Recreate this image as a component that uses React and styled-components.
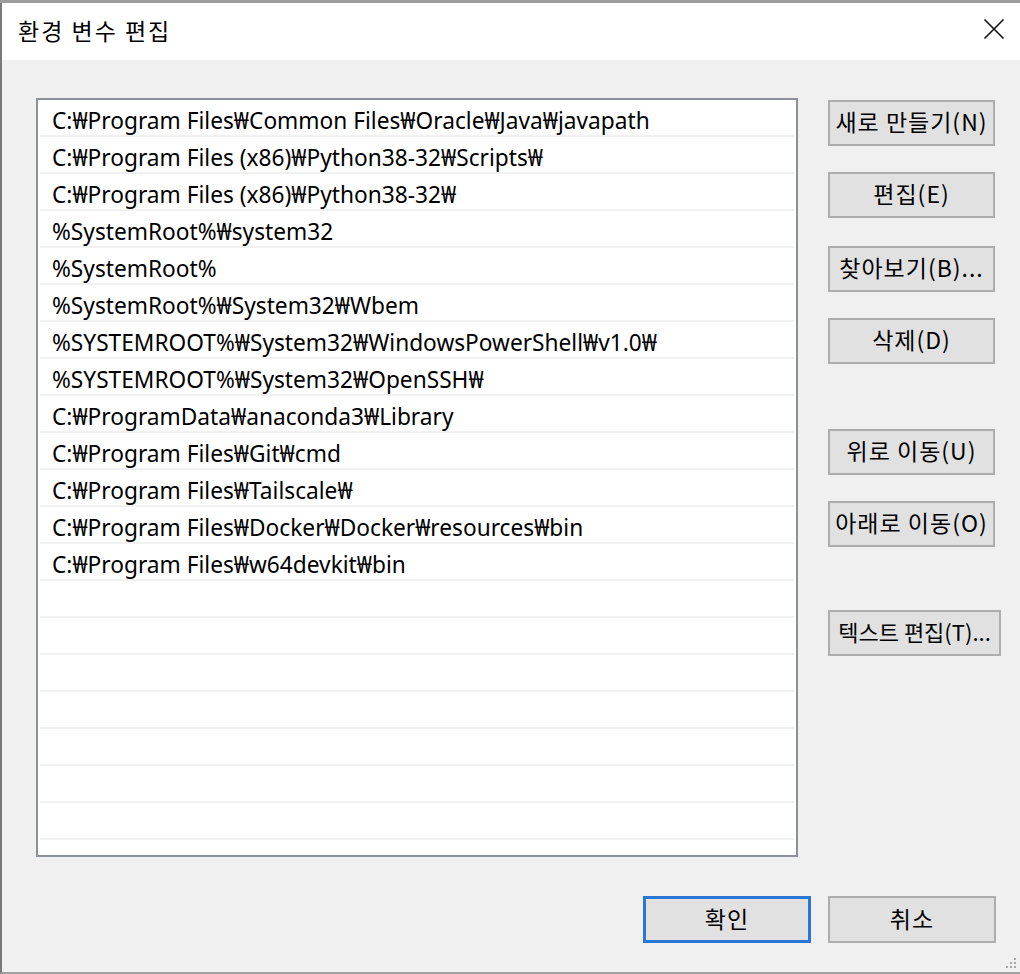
import React from "react";
import styled, { createGlobalStyle } from "styled-components";

const GlobalStyle = createGlobalStyle`
  html, body { margin: 0; padding: 0; background: #f0f0f0; }
  * { box-sizing: border-box; }
  body { font-family: "Noto Sans", "Noto Sans CJK KR", sans-serif; }
`;

const Screen = styled.div`
  width: 1020px;
  height: 974px;
  display: flex;
  flex-direction: column;
  overflow: hidden;
  background: #f0f0f0;
`;

const BehindStrip = styled.div`
  height: 3px;
  background: #9c9c9c;
  flex: none;
`;

const Dialog = styled.div`
  flex: 1;
  display: flex;
  flex-direction: column;
  border-left: 2px solid #7a7a7a;
  border-bottom: 2px solid #a0a0a0;
  position: relative;
`;

const TitleBar = styled.div`
  height: 57px;
  flex: none;
  background: #ffffff;
  display: flex;
  align-items: center;
  justify-content: space-between;
  padding-left: 16px;
`;

const Title = styled.div`
  font-family: "Noto Sans CJK KR", sans-serif;
  font-size: 23px;
  letter-spacing: 2px;
  color: #000;
  padding-bottom: 4px;
`;

const CloseButton = styled.div`
  width: 53px;
  height: 57px;
  display: flex;
  align-items: center;
  justify-content: center;
  padding-bottom: 5px;
`;

const Body = styled.div`
  flex: 1;
  display: flex;
  flex-direction: column;
  padding: 38px 0 0 34px;
`;

const Main = styled.div`
  display: flex;
  align-items: flex-start;
`;

const ListBox = styled.div`
  width: 762px;
  height: 759px;
  border: 2px solid #8c9097;
  background: #ffffff;
  overflow: hidden;
  padding: 0 2px;
`;

const Row = styled.div`
  height: 37px;
  display: flex;
  align-items: center;
  padding: 5px 0 0 12px;
  border-bottom: 2px solid #f1f1f1;
  font-family: "Noto Sans", "Noto Sans CJK KR", sans-serif;
  font-size: 22.7px;
  color: #000;
  white-space: nowrap;
`;

const ButtonColumn = styled.div`
  display: flex;
  flex-direction: column;
  margin-left: 30px;
  padding-top: 2px;
`;

const Button = styled.div`
  width: ${(p) => p.$w || 167}px;
  height: ${(p) => p.$h || 46}px;
  margin-top: ${(p) => p.$mt || 0}px;
  background: #e1e1e1;
  border: ${(p) => (p.$focus ? "3px solid #2a78d6" : "2px solid #adadad")};
  display: flex;
  align-items: center;
  justify-content: center;
  font-family: "Noto Sans CJK KR", sans-serif;
  font-size: ${(p) => (p.$tight ? 22 : 23)}px;
  letter-spacing: ${(p) => (p.$tight ? 0 : 1)}px;
  color: #000;
  white-space: nowrap;
  overflow: hidden;
  flex: none;
  padding-bottom: 4px;
`;

const Footer = styled.div`
  display: flex;
  justify-content: flex-end;
  gap: 17px;
  padding: 39px 24px 0 0;
`;

const Grip = styled.div`
  position: absolute;
  right: 3px;
  bottom: 2px;
  width: 16px;
  height: 16px;
`;

const entries = [
  "C:₩Program Files₩Common Files₩Oracle₩Java₩javapath",
  "C:₩Program Files (x86)₩Python38-32₩Scripts₩",
  "C:₩Program Files (x86)₩Python38-32₩",
  "%SystemRoot%₩system32",
  "%SystemRoot%",
  "%SystemRoot%₩System32₩Wbem",
  "%SYSTEMROOT%₩System32₩WindowsPowerShell₩v1.0₩",
  "%SYSTEMROOT%₩System32₩OpenSSH₩",
  "C:₩ProgramData₩anaconda3₩Library",
  "C:₩Program Files₩Git₩cmd",
  "C:₩Program Files₩Tailscale₩",
  "C:₩Program Files₩Docker₩Docker₩resources₩bin",
  "C:₩Program Files₩w64devkit₩bin",
];

const rows = [...entries, ...Array(8).fill("")];

export default function App() {
  return (
    <Screen>
      <GlobalStyle />
      <BehindStrip />
      <Dialog>
        <TitleBar>
          <Title>환경 변수 편집</Title>
          <CloseButton>
            <svg width="22" height="22" viewBox="0 0 22 22">
              <path d="M1.5 1.5 L20.5 20.5 M20.5 1.5 L1.5 20.5" stroke="#111" strokeWidth="1.6" fill="none" />
            </svg>
          </CloseButton>
        </TitleBar>
        <Body>
          <Main>
            <ListBox>
              {rows.map((t, i) => (
                <Row key={i}>{t}</Row>
              ))}
            </ListBox>
            <ButtonColumn>
              <Button>새로 만들기(N)</Button>
              <Button $mt={26}>편집(E)</Button>
              <Button $mt={28}>찾아보기(B)...</Button>
              <Button $mt={26}>삭제(D)</Button>
              <Button $mt={65}>위로 이동(U)</Button>
              <Button $mt={26}>아래로 이동(O)</Button>
              <Button $mt={63} $w={173} $tight>텍스트 편집(T)...</Button>
            </ButtonColumn>
          </Main>
          <Footer>
            <Button $focus $w={168} $h={47}>확인</Button>
            <Button $w={168} $h={47}>취소</Button>
          </Footer>
        </Body>
        <Grip>
          <svg width="16" height="16" viewBox="0 0 16 16">
            {[
              [13, 3],
              [9, 7], [13, 7],
              [5, 11], [9, 11], [13, 11],
            ].map(([x, y], i) => (
              <rect key={i} x={x} y={y} width="2" height="2" fill="#a8a8a8" />
            ))}
          </svg>
        </Grip>
      </Dialog>
    </Screen>
  );
}
